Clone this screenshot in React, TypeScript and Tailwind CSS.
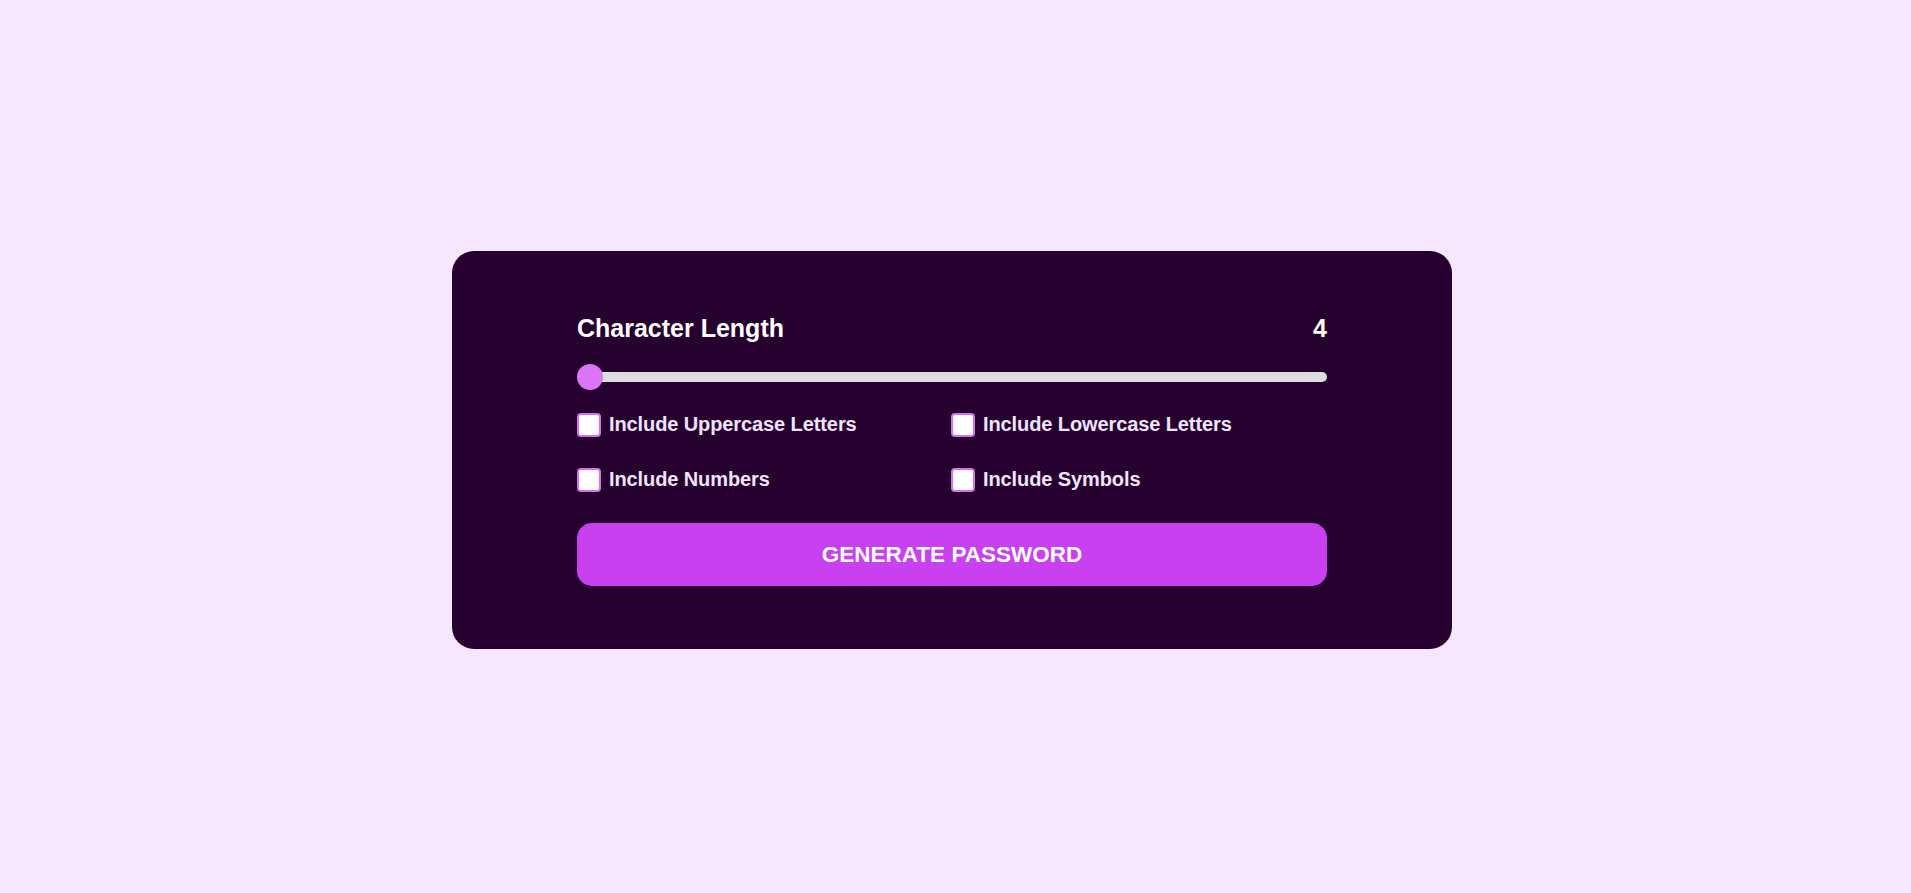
import { useState } from 'react'

const OPTIONS = [
  'Include Uppercase Letters',
  'Include Lowercase Letters',
  'Include Numbers',
  'Include Symbols',
]

export default function App() {
  const [length] = useState(4)
  const [checked, setChecked] = useState<Record<string, boolean>>({})

  function toggle(name: string) {
    setChecked((prev) => ({ ...prev, [name]: !prev[name] }))
  }

  return (
    <div className="min-h-screen flex items-center justify-center bg-[#f7e7fe] pt-[7px] pr-[7px] font-['Liberation_Sans',Arial,sans-serif]">
      <div className="w-[1000px] rounded-[22px] bg-[#26002e] px-[125px] py-[63px]">
        {/* Length */}
        <div className="flex items-center justify-between text-[25px] leading-[28px] font-bold text-white">
          <span>Character Length</span>
          <span className="text-[#fffaf0]">{length}</span>
        </div>

        <div role="slider" aria-valuenow={length} className="relative mt-[22px] flex h-[26px] items-center">
          <div className="h-[10px] w-full rounded-full bg-[#dedede]" />
          <div className="absolute left-0 top-0 h-[26px] w-[26px] rounded-full bg-[#dc74f5]" />
        </div>

        {/* Options */}
        <div className="mt-[23px] grid grid-cols-[374px_1fr] gap-y-[31px]">
          {OPTIONS.map((opt) => (
            <label key={opt} className="flex h-[24px] cursor-pointer items-center gap-[8px]">
              <span
                onClick={() => toggle(opt)}
                className="flex h-[24px] w-[24px] shrink-0 items-center justify-center rounded-[4px] border-2 border-[#d470f2] bg-white"
              >
                {checked[opt] && <span className="h-[12px] w-[12px] rounded-[2px] bg-[#c940f0]" />}
              </span>
              <span className="-mt-[2px] text-[20px] leading-[24px] font-bold tracking-[-0.1px] text-[#f1e4ff]">{opt}</span>
            </label>
          ))}
        </div>

        <button className="mt-[31px] flex h-[63px] w-full items-center justify-center rounded-[15px] bg-[#c940f0] text-[22.5px] font-bold uppercase text-white">
          Generate Password
        </button>
      </div>
    </div>
  )
}
